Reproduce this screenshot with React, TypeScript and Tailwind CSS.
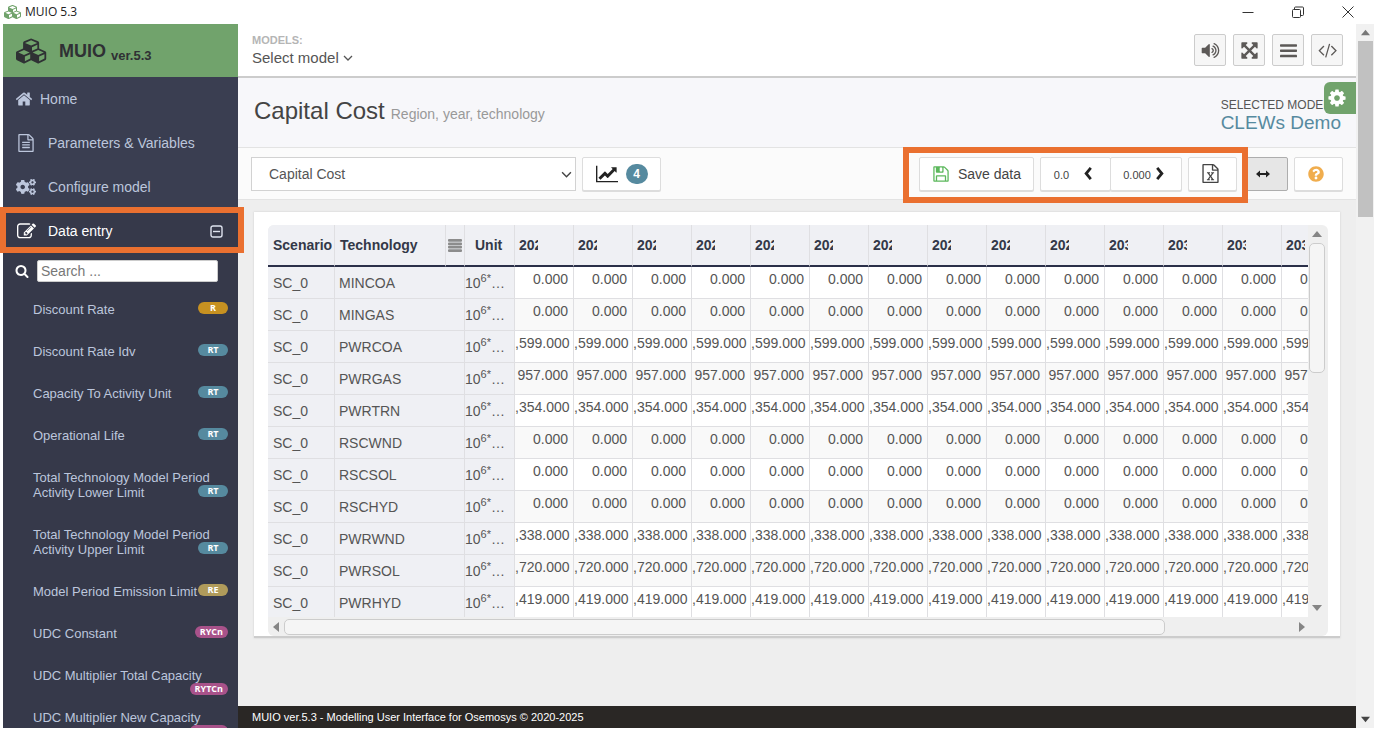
import React from "react";
import { FaCogs, FaQuestionCircle } from "react-icons/fa";

type IconProps = { className?: string };

const OUTLINE_FILE =
  "M1596 380q28 28 48 76t20 88v1152q0 40-28 68t-68 28h-1344q-40 0-68-28t-28-68v-1600q0-40 28-68t68-28h896q40 0 88 20t76 48zm-444-244v376h376q-10-29-22-41l-313-313q-12-12-41-22zm384 1528v-1024h-416q-40 0-68-28t-28-68v-416h-768v1536h1280z";

function Glyph({ d, w = 1792, className }: { d: string; w?: number; className?: string }) {
  return (
    <svg viewBox={`0 0 ${w} 1792`} fill="currentColor" className={className} aria-hidden="true">
      <path d={d} />
    </svg>
  );
}

const Cubes = ({ className }: IconProps) => (
  <Glyph
    className={className}
    w={2304}
    d="M640 1632l384-192v-314l-384 164v342zm-64-454l404-173-404-173-404 173zm1088 454l384-192v-314l-384 164v342zm-64-454l404-173-404-173-404 173zm-448-293l384-165v-266l-384 164v267zm-64-379l441-189-441-189-441 189zm1088 518v416q0 36-19 67t-52 47l-448 224q-25 14-57 14t-57-14l-448-224q-4-2-7-4-2 2-7 4l-448 224q-25 14-57 14t-57-14l-448-224q-33-16-52-47t-19-67v-416q0-38 21.5-70t56.5-48l434-186v-400q0-38 21.5-70t56.5-48l448-192q23-10 50-10t50 10l448 192q35 16 56.5 48t21.5 70v400l434 186q36 16 57 48t21 70z"
  />
);
const Home = ({ className }: IconProps) => (
  <Glyph
    className={className}
    d="M1472 992v480q0 26-19 45t-45 19h-384v-384h-256v384h-384q-26 0-45-19t-19-45v-480q0-1 .5-3t.5-3l575-474 575 474q1 2 1 6zm223-69l-62 74q-8 9-21 11h-3q-13 0-21-7l-692-577-692 577q-12 8-24 7-13-2-21-11l-62-74q-8-10-7-23.5t11-21.5l719-599q32-26 76-26t76 26l244 204v-195q0-14 9-23t23-9h192q14 0 23 9t9 23v408l219 182q10 8 11 21.5t-7 23.5z"
  />
);
const FileText = ({ className }: IconProps) => (
  <Glyph
    className={className}
    d={
      OUTLINE_FILE +
      "m-1024-864q0-14 9-23t23-9h704q14 0 23 9t9 23v64q0 14-9 23t-23 9h-704q-14 0-23-9t-9-23v-64zm736 224q14 0 23 9t9 23v64q0 14-9 23t-23 9h-704q-14 0-23-9t-9-23v-64q0-14 9-23t23-9h704zm0 256q14 0 23 9t9 23v64q0 14-9 23t-23 9h-704q-14 0-23-9t-9-23v-64q0-14 9-23t23-9h704z"
    }
  />
);
const FileExcel = ({ className }: IconProps) => (
  <Glyph
    className={className}
    d={
      OUTLINE_FILE +
      "m-979-234v106h281v-106h-75l103-161q5-7 10-16.5t7.5-13.5 3.5-4h2q1 4 5 10 2 4 4.5 7.5t6 8 6.5 8.5l107 161h-76v106h291v-106h-68l-192-273 195-282h67v-107h-279v107h74l-103 159q-4 7-10 16.5t-9 13.5l-2 3h-2q-1-4-5-10-6-11-17-23l-106-159h76v-107h-290v107h68l189 272-194 283h-68z"
    }
  />
);
const Edit = ({ className }: IconProps) => (
  <Glyph
    className={className}
    d="M888 1184l116-116-152-152-116 116v56h96v96h56zm440-720q-16-16-33 1l-350 350q-17 17-1 33t33-1l350-350q17-17 1-33zm80 594v190q0 119-84.5 203.5t-203.5 84.5h-832q-119 0-203.5-84.5t-84.5-203.5v-832q0-119 84.5-203.5t203.5-84.5h832q63 0 117 25 15 7 18 23 3 17-9 29l-49 49q-14 14-32 8-23-6-45-6h-832q-66 0-113 47t-47 113v832q0 66 47 113t113 47h832q66 0 113-47t47-113v-126q0-13 9-22l64-64q15-15 35-7t20 29zm-96-738l288 288-672 672h-288v-288zm444 132l-92 92-288-288 92-92q28-28 68-28t68 28l152 152q28 28 28 68t-28 68z"
  />
);
const Search = ({ className }: IconProps) => (
  <Glyph
    className={className}
    d="M1216 832q0-185-131.5-316.5t-316.5-131.5-316.5 131.5-131.5 316.5 131.5 316.5 316.5 131.5 316.5-131.5 131.5-316.5zm512 832q0 52-38 90t-90 38q-54 0-90-38l-343-342q-179 124-399 124-143 0-273.5-55.5t-225-150-150-225-55.5-273.5 55.5-273.5 150-225 225-150 273.5-55.5 273.5 55.5 225 150 150 225 55.5 273.5q0 220-124 399l343 343q37 37 37 90z"
  />
);
const Floppy = ({ className }: IconProps) => (
  <Glyph
    className={className}
    d="M512 1536h768v-384h-768v384zm896 0h128v-896q0-14-10-38.5t-20-34.5l-281-281q-10-10-34-20t-39-10v416q0 40-28 68t-68 28h-576q-40 0-68-28t-28-68v-416h-128v1280h128v-416q0-40 28-68t68-28h832q40 0 68 28t28 68v416zm-384-928v-320q0-13-9.5-22.5t-22.5-9.5h-192q-13 0-22.5 9.5t-9.5 22.5v320q0 13 9.5 22.5t22.5 9.5h192q13 0 22.5-9.5t9.5-22.5zm640 32v928q0 40-28 68t-68 28h-1344q-40 0-68-28t-28-68v-1344q0-40 28-68t68-28h928q40 0 88 20t76 48l280 280q28 28 48 76t20 88z"
  />
);
const LineChart = ({ className }: IconProps) => (
  <Glyph
    className={className}
    w={2048}
    d="M2048 1536v128h-2048v-1536h128v1408h1920zm-128-1248v435q0 21-19.5 29.5t-35.5-7.5l-121-121-633 633q-10 10-23 10t-23-10l-233-233-416 416-192-192 585-585q10-10 23-10t23 10l233 233 464-464-121-121q-16-16-7.5-35.5t29.5-19.5h435q14 0 23 9t9 23z"
  />
);
const Volume = ({ className }: IconProps) => (
  <Glyph
    className={className}
    d="M832 352v1088q0 26-19 45t-45 19-45-19l-333-333h-262q-26 0-45-19t-19-45v-384q0-26 19-45t45-19h262l333-333q19-19 45-19t45 19 19 45zm384 544q0 76-42.5 141.5t-112.5 93.5q-10 5-25 5-26 0-45-18.5t-19-45.5q0-21 12-35.5t29-25 34-23 29-36 12-56.5-12-56.5-29-36-34-23-29-25-12-35.5q0-27 19-45.5t45-18.5q15 0 25 5 70 27 112.5 93t42.5 142zm256 0q0 153-85 282.5t-225 188.5q-13 5-25 5-27 0-46-19t-19-45q0-39 39-59 56-29 76-44 74-54 115.5-135.5t41.5-173.5-41.5-173.5-115.5-135.5q-20-15-76-44-39-20-39-59 0-26 19-45t45-19q13 0 26 5 140 59 225 188.5t85 282.5zm256 0q0 230-127 422.5t-338 283.5q-13 5-26 5-26 0-45-19t-19-45q0-36 39-59 7-4 22.5-10.5t22.5-10.5q46-25 82-51 123-91 192-227t69-289-69-289-192-227q-36-26-82-51-7-4-22.5-10.5t-22.5-10.5q-39-23-39-59 0-26 19-45t45-19q13 0 26 5 211 91 338 283.5t127 422.5z"
  />
);
const Expand = ({ className }: IconProps) => (
  <Glyph
    className={className}
    d="M1411 541l-355 355 355 355 144-144q29-31 70-14 39 17 39 59v448q0 26-19 45t-45 19h-448q-42 0-59-40-17-39 14-69l144-144-355-355-355 355 144 144q31 30 14 69-17 40-59 40h-448q-26 0-45-19t-19-45v-448q0-42 40-59 39-17 69 14l144 144 355-355-355-355-144 144q-19 19-45 19-12 0-24-5-40-17-40-59v-448q0-26 19-45t45-19h448q42 0 59 40 17 39-14 69l-144 144 355 355 355-355-144-144q-31-30-14-69 17-40 59-40h448q26 0 45 19t19 45v448q0 42-39 59-13 5-25 5-26 0-45-19z"
  />
);
const Code = ({ className }: IconProps) => (
  <Glyph
    className={className}
    w={1920}
    d="M681 1399l-50 50q-10 10-23 10t-23-10l-466-466q-10-10-10-23t10-23l466-466q10-10 23-10t23 10l50 50q10 10 10 23t-10 23l-393 393 393 393q10 10 10 23t-10 23zm591-1067l-373 1291q-4 13-15.5 19.5t-23.5 2.5l-62-17q-13-4-19.5-15.5t-2.5-24.5l373-1291q4-13 15.5-19.5t23.5-2.5l62 17q13 4 19.5 15.5t2.5 24.5zm657 651l-466 466q-10 10-23 10t-23-10l-50-50q-10-10-10-23t10-23l393-393-393-393q-10-10-10-23t10-23l50-50q10-10 23-10t23 10l466 466q10 10 10 23t-10 23z"
  />
);
const Gear = ({ className }: IconProps) => (
  <Glyph
    className={className}
    d="M1152 896q0-106-75-181t-181-75-181 75-75 181 75 181 181 75 181-75 75-181zm512-109v222q0 12-8 23t-20 13l-185 28q-19 54-39 91 35 50 107 138 10 12 10 25t-9 23q-27 37-99 108t-94 71q-12 0-26-9l-138-108q-44 23-91 38-16 136-29 186-7 28-36 28h-222q-14 0-24.5-8.5t-11.5-21.5l-28-184q-49-16-90-37l-141 107q-10 9-25 9-14 0-25-11-126-114-165-168-7-10-7-23 0-12 8-23 15-21 51-66.5t54-70.5q-27-50-41-99l-183-27q-13-2-21-12.5t-8-23.5v-222q0-12 8-23t19-13l186-28q14-46 39-92-40-57-107-138-10-12-10-24 0-10 9-23 26-36 98.5-107.5t94.5-71.5q13 0 26 10l138 107q44-23 91-38 16-136 29-186 7-28 36-28h222q14 0 24.5 8.5t11.5 21.5l28 184q49 16 90 37l142-107q9-9 24-9 13 0 25 10 129 119 165 170 7 8 7 22 0 12-8 23-15 21-51 66.5t-54 70.5q26 50 41 98l183 28q13 2 21 12.5t8 23.5z"
  />
);
const Bars = ({ className }: IconProps) => (
  <svg viewBox="0 0 16 14" className={className} fill="currentColor" aria-hidden="true">
    <rect y="1" width="16" height="2.4" rx="0.6" />
    <rect y="6" width="16" height="2.4" rx="0.6" />
    <rect y="11" width="16" height="2.4" rx="0.6" />
  </svg>
);
const Chevron = ({ d, className }: { d: string; className?: string }) => (
  <svg viewBox="0 0 10 14" className={className} fill="none" stroke="currentColor" strokeWidth="3" aria-hidden="true">
    <path d={d} />
  </svg>
);
const DownCaret = ({ className }: IconProps) => (
  <svg viewBox="0 0 10 6" className={className} fill="none" stroke="currentColor" strokeWidth="1.3" aria-hidden="true">
    <path d="M1 1l4 4 4-4" />
  </svg>
);
const Triangle = ({ d, className }: { d: string; className?: string }) => (
  <svg viewBox="0 0 10 10" className={className} fill="currentColor" aria-hidden="true">
    <path d={d} />
  </svg>
);
const UP = "M0 8l5-6 5 6z";
const DOWN = "M0 2l5 6 5-6z";
const LEFT = "M8 0l-6 5 6 5z";
const RIGHT = "M2 0l6 5-6 5z";

type Param = { name: string; tag: string; tone: string };
const params: Param[] = [
  { name: "Discount Rate", tag: "R", tone: "bg-[#c79121]" },
  { name: "Discount Rate Idv", tag: "RT", tone: "bg-[#568a9f]" },
  { name: "Capacity To Activity Unit", tag: "RT", tone: "bg-[#568a9f]" },
  { name: "Operational Life", tag: "RT", tone: "bg-[#568a9f]" },
  { name: "Total Technology Model Period Activity Lower Limit", tag: "RT", tone: "bg-[#568a9f]" },
  { name: "Total Technology Model Period Activity Upper Limit", tag: "RT", tone: "bg-[#568a9f]" },
  { name: "Model Period Emission Limit", tag: "RE", tone: "bg-[#b09b5b]" },
  { name: "UDC Constant", tag: "RYCn", tone: "bg-[#a8528a]" },
  { name: "UDC Multiplier Total Capacity", tag: "RYTCn", tone: "bg-[#a8528a]" },
  { name: "UDC Multiplier New Capacity", tag: "RYTCn", tone: "bg-[#a8528a]" },
];

const years = Array.from({ length: 14 }, (_, i) => 2020 + i);
const rows: [string, string][] = [
  ["MINCOA", "0.000"],
  ["MINGAS", "0.000"],
  ["PWRCOA", ",599.000"],
  ["PWRGAS", "957.000"],
  ["PWRTRN", ",354.000"],
  ["RSCWND", "0.000"],
  ["RSCSOL", "0.000"],
  ["RSCHYD", "0.000"],
  ["PWRWND", ",338.000"],
  ["PWRSOL", ",720.000"],
  ["PWRHYD", ",419.000"],
];

function TitleBar() {
  return (
    <div className="flex h-6 shrink-0 items-center bg-white pl-1 font-['Open_Sans',sans-serif] text-xs text-[#222]">
      <Cubes className="h-4 w-[18px] text-[#71a36c]" />
      <span className="ml-[3px]">MUIO 5.3</span>
      <div className="ml-auto flex gap-[38px] pr-5 text-[#333]">
        <button aria-label="Minimize">
          <svg viewBox="0 0 12 12" className="size-3" stroke="currentColor" aria-hidden="true">
            <path d="M0.5 6.5h11" />
          </svg>
        </button>
        <button aria-label="Restore">
          <svg viewBox="0 0 12 12" className="size-3" fill="none" stroke="currentColor" aria-hidden="true">
            <rect x="0.5" y="3.5" width="8" height="8" rx="1" />
            <path d="M2.5 3V2q0-1 1-1h7q1 0 1 1V8.5q0 1-1 1H9" />
          </svg>
        </button>
        <button aria-label="Close">
          <svg viewBox="0 0 12 12" className="size-3" stroke="currentColor" aria-hidden="true">
            <path d="M0.5 0.5l11 11M11.5 0.5l-11 11" />
          </svg>
        </button>
      </div>
    </div>
  );
}

function Sidebar() {
  return (
    <aside className="relative ml-[3px] flex w-[235px] shrink-0 flex-col bg-[#36394a] text-[#bcc6dc]">
      <div className="flex h-[53px] shrink-0 items-center bg-[#71a36c] pl-[13px] text-[#2f3134]">
        <Cubes className="h-[26px] w-8" />
        <span className="ml-[11px] text-lg font-bold">MUIO</span>
        <span className="ml-[5px] pt-[10px] text-[13px] font-bold">ver.5.3</span>
      </div>
      <nav className="flex min-h-0 flex-1 flex-col overflow-hidden text-sm">
        <div className="shrink-0 bg-[#3a3e51]">
          <a href="#home" className="flex h-11 items-center pl-3">
            <Home className="size-[18px]" />
            <span className="ml-[7px]">Home</span>
          </a>
          <a href="#params" className="flex h-11 items-center pl-[14px]">
            <FileText className="size-[18px]" />
            <span className="ml-[13px]">Parameters &amp; Variables</span>
          </a>
          <a href="#configure" className="flex h-11 items-center pl-[13px]">
            <FaCogs className="size-5" aria-hidden="true" />
            <span className="ml-3">Configure model</span>
          </a>
        </div>
        <a href="#data" className="flex h-11 shrink-0 items-center pl-[14px] pr-[15px] text-white">
          <Edit className="size-[19px]" />
          <span className="ml-3">Data entry</span>
          <svg viewBox="0 0 13 13" className="ml-auto size-[13px]" fill="none" stroke="#dde2ee" strokeWidth="1.4" aria-hidden="true">
            <rect x="1" y="1" width="11" height="11" rx="2" />
            <path d="M3 6.5h7" />
          </svg>
        </a>
        <div className="flex h-9 shrink-0 items-center pl-3">
          <Search className="size-[14px] text-white" />
          <input
            aria-label="Search"
            placeholder="Search ..."
            className="ml-2 h-[22px] w-[181px] rounded-xs border border-[#ccc] bg-white px-[3px] text-sm text-[#333] placeholder:text-[#777]"
          />
        </div>
        <div className="shrink-0">
          {params.map((p) => (
            <a
              key={p.name}
              href="#param"
              className="block pb-[14px] pl-[30px] pr-[10px] pt-[13px] text-[13px] leading-[15px]"
            >
              {p.name}
              <span
                className={`float-right h-3 min-w-[30px] rounded-full px-[5px] text-center font-['Open_Sans',sans-serif] text-[9px] font-bold leading-3 text-white ${p.tone}`}
              >
                {p.tag}
              </span>
            </a>
          ))}
        </div>
      </nav>
      <div className="pointer-events-none absolute -left-[3px] top-[183px] h-[46px] w-[244px] border-[6px] border-[#ea7030]" />
    </aside>
  );
}

const headBtn =
  "flex h-8 w-8 items-center justify-center rounded-xs border border-[#ccc] bg-[#f6f6f6] text-[#5c5957]";
const toolBtn =
  "flex h-[34px] shrink-0 items-center justify-center rounded-xs border border-[#ddd] bg-white text-sm text-[#444] shadow-[0_1px_0_#ddd]";

function Header() {
  return (
    <header className="flex h-[54px] shrink-0 items-center border-b-2 border-[#ccc] bg-white pl-[14px] pr-[13px]">
      <div>
        <div className="text-[11px] font-bold leading-4 text-[#b5b5b5]">MODELS:</div>
        <button className="flex items-center gap-1 text-[15px] leading-5 text-[#555]">
          Select model
          <DownCaret className="h-[6px] w-[10px]" />
        </button>
      </div>
      <div className="ml-auto flex gap-[7px]">
        <button className={headBtn} aria-label="Sound">
          <Volume className="size-[19px]" />
        </button>
        <button className={headBtn} aria-label="Full screen">
          <Expand className="size-[19px]" />
        </button>
        <button className={headBtn} aria-label="Menu">
          <Bars className="h-[15px] w-[17px]" />
        </button>
        <button className={headBtn} aria-label="Source">
          <Code className="h-[18px] w-5" />
        </button>
      </div>
    </header>
  );
}

function PageTitle() {
  return (
    <div className="relative flex h-[69px] shrink-0 items-center bg-[#f7f7fa] pl-4 pr-[15px]">
      <h1 className="flex items-baseline gap-[6px] pb-[3px] text-2xl text-[#444]">
        Capital Cost <small className="text-[14px] text-[#999]">Region, year, technology</small>
      </h1>
      <div className="ml-auto pt-[5px] text-[#555]">
        <div className="text-xs leading-4">SELECTED MODEL</div>
        <div className="text-[19px] leading-5 text-[#568a9f]">CLEWs Demo</div>
      </div>
      <button
        aria-label="Settings"
        className="absolute right-0 top-1 flex size-8 items-center justify-center rounded-l-md bg-[#71a36c] pr-[6px] text-white"
      >
        <Gear className="size-5" />
      </button>
    </div>
  );
}

function Toolbar() {
  return (
    <div className="relative flex h-[53px] shrink-0 items-center gap-[6px] border-y border-[#e3e3e3] bg-[#fbfbfb] px-[13px]">
      <div className="relative w-[325px]">
        <select
          aria-label="Parameter"
          className="h-[34px] w-full appearance-none border border-[#d2d2d2] bg-white px-[17px] text-sm text-[#555]"
        >
          <option>Capital Cost</option>
        </select>
        <DownCaret className="pointer-events-none absolute right-1 top-[14px] h-[7px] w-[11px] text-[#444]" />
      </div>
      <button className={`${toolBtn} w-[79px] gap-2`} aria-label="Chart, 4">
        <LineChart className="h-5 w-[22px] text-[#222]" />
        <span className="flex h-5 w-[22px] items-center justify-center rounded-full bg-[#568a9f] text-xs font-bold text-white">
          4
        </span>
      </button>
      <button className={`${toolBtn} ml-auto w-[115px] gap-2`}>
        <Floppy className="size-[18px] text-[#5cb85c]" />
        Save data
      </button>
      <div className="flex">
        <button className={`${toolBtn} w-[71px] gap-[14px] pr-1`} aria-label="Fewer decimals, 0.0">
          <span className="pt-[5px] text-[11px]">0.0</span>
          <Chevron d="M8 1L3 7l5 6" className="h-[13px] w-[10px] text-[#222]" />
        </button>
        <button className={`${toolBtn} -ml-px w-[72px] gap-1 pr-1`} aria-label="More decimals, 0.000">
          <span className="pt-[5px] text-[11px]">0.000</span>
          <Chevron d="M2 1l5 6-5 6" className="h-[13px] w-[10px] text-[#222]" />
        </button>
      </div>
      <button className={`${toolBtn} w-[49px] pr-1`} aria-label="Export to Excel">
        <FileExcel className="size-[19px]" />
      </button>
      <button
        className="flex h-[34px] w-[45px] items-center justify-center rounded-xs border border-[#adadad] bg-[#e6e6e6] pr-[6px] text-[#222]"
        aria-label="Fit width"
      >
        <svg viewBox="0 0 14 8" className="h-2 w-[14px]" fill="currentColor" aria-hidden="true">
          <path d="M0 4l4-3.5v2.6h6V.5L14 4l-4 3.5V4.9H4v2.6z" />
        </svg>
      </button>
      <button className={`${toolBtn} w-[49px] pr-[6px]`} aria-label="Help">
        <FaQuestionCircle className="size-4 text-[#f0ad4e]" aria-hidden="true" />
      </button>
      <div className="pointer-events-none absolute -top-px right-[108px] h-[56px] w-[345px] border-[6px] border-[#ea7030]" />
    </div>
  );
}

const headCell = "h-[42px] border-b-2 border-r border-b-[#2b3049] border-r-[#dfdfe2] bg-[#eff0f4] p-0 text-left font-bold text-[#333848]";
const fixedCell = "h-8 border-b border-r border-[#dfdfe2] bg-[#eff0f4] p-0";

function DataGrid() {
  return (
    <div className="overflow-hidden rounded-md bg-[#efefef]">
      <div className="flex h-[392px]">
        <div className="min-w-0 flex-1 overflow-hidden">
          <table className="w-[1073px] table-fixed border-separate border-spacing-0 text-sm leading-4 text-[#555]">
            <colgroup>
              <col className="w-[67px]" />
              <col className="w-[111px]" />
              <col className="w-[19px]" />
              <col className="w-[50px]" />
              {years.map((y) => (
                <col key={y} className="w-[59px]" />
              ))}
            </colgroup>
            <thead>
              <tr>
                <th className={`${headCell} pl-[5px]`}>Scenario</th>
                <th className={`${headCell} pl-[5px]`}>Technology</th>
                <th className={headCell} aria-label="Column filter">
                  <svg viewBox="0 0 14 13" className="mx-auto h-[13px] w-[14px]" fill="#8c8c8c" aria-hidden="true">
                    <rect width="14" height="2.8" rx="1" />
                    <rect y="3.4" width="14" height="2.8" rx="1" />
                    <rect y="6.8" width="14" height="2.8" rx="1" />
                    <rect y="10.2" width="14" height="2.8" rx="1" />
                  </svg>
                </th>
                <th className={`${headCell} pl-[10px]`}>Unit</th>
                {years.map((y) => (
                  <th key={y} className={`${headCell} pl-1`}>
                    <div className="w-[19px] overflow-hidden">{y}</div>
                  </th>
                ))}
              </tr>
            </thead>
            <tbody>
              {rows.map(([tech, value], i) => (
                <tr key={tech} className={i % 2 ? "bg-[#f9f9f9]" : "bg-white"}>
                  <td className={`${fixedCell} pl-[5px]`}>SC_0</td>
                  <td className={`${fixedCell} pl-1`} colSpan={2}>
                    {tech}
                  </td>
                  <td className={fixedCell}>
                    10<sup className="text-[11px]">6*</sup>…
                  </td>
                  {years.map((y) => (
                    <td key={y} className="h-8 border-b border-r border-[#dfdfe2] p-0 pr-[5px] pt-1 text-right align-top">
                      {value}
                    </td>
                  ))}
                </tr>
              ))}
            </tbody>
          </table>
        </div>
        <div className="flex w-5 flex-col items-center pr-[3px] text-[#858585]">
          <Triangle d={UP} className="my-1 size-[10px]" />
          <div className="h-[130px] w-4 rounded-[5px] border border-[#ccc] bg-[#f5f5f5]" />
          <Triangle d={DOWN} className="mb-1 mt-auto size-[10px]" />
        </div>
      </div>
      <div className="flex h-[19px] items-center pr-[21px] text-[#858585]">
        <Triangle d={LEFT} className="mx-[3px] size-[10px]" />
        <div className="flex-1">
          <div className="h-4 w-[87%] rounded-[5px] border border-[#ccc] bg-[#f5f5f5]" />
        </div>
        <Triangle d={RIGHT} className="size-[10px]" />
      </div>
    </div>
  );
}

export default function App() {
  return (
    <div className="flex h-screen flex-col overflow-hidden bg-white pb-px font-['Liberation_Sans',Arial,sans-serif]">
      <TitleBar />
      <div className="flex min-h-0 flex-1">
        <Sidebar />
        <main className="flex min-w-0 flex-1 flex-col bg-[#eee]">
          <Header />
          <PageTitle />
          <Toolbar />
          <section className="ml-4 mr-4 mt-3 border-b-2 border-[#ccc] bg-white pl-[14px] pr-3 pt-[13px] shadow-[0_0_2px_#ccc]">
            <DataGrid />
          </section>
          <footer className="mt-auto flex h-[22px] shrink-0 items-center bg-[#2a2725] pl-[14px] text-[11px] text-white">
            MUIO ver.5.3 - Modelling User Interface for Osemosys © 2020-2025
          </footer>
        </main>
        <div className="flex w-[18px] shrink-0 flex-col items-center bg-[#f1f1f1] text-[#777]">
          <Triangle d={UP} className="my-1 size-[9px]" />
          <div className="h-[176px] w-[15px] bg-[#c1c1c1]" />
          <Triangle d={DOWN} className="mb-1 mt-auto size-[9px] text-[#444]" />
        </div>
      </div>
    </div>
  );
}
